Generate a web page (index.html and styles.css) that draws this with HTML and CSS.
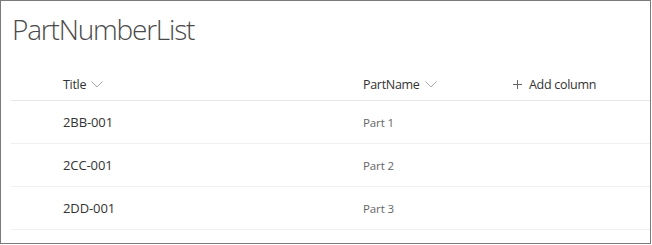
FILE: index.html
```html
<!DOCTYPE html>
<html>
<head>
    <title>PartNumberList</title>
    <meta charset="utf-8">
    <link rel="stylesheet" href="styles.css">
</head>
<body>
    <div class="frame">
        <h1 class="list-title">PartNumberList</h1>
        <div class="list">
            <div class="row head">
                <div class="cell col-title">Title
                    <svg class="chev" width="12" height="7" viewBox="0 0 12 7"><polyline points="0.5,0.5 6,6 11.5,0.5" fill="none" stroke="#a6a6a6" stroke-width="1"/></svg>
                </div>
                <div class="cell col-part">PartName
                    <svg class="chev" width="12" height="7" viewBox="0 0 12 7"><polyline points="0.5,0.5 6,6 11.5,0.5" fill="none" stroke="#a6a6a6" stroke-width="1"/></svg>
                </div>
                <div class="cell col-add">
                    <svg class="plus" width="9" height="9" viewBox="0 0 9 9"><path d="M4.5 0v9M0 4.5h9" stroke="#666" stroke-width="1"/></svg>
                    Add column
                </div>
            </div>
            <div class="row">
                <div class="cell col-title">2BB-001</div>
                <div class="cell col-part small">Part 1</div>
            </div>
            <div class="row">
                <div class="cell col-title">2CC-001</div>
                <div class="cell col-part small">Part 2</div>
            </div>
            <div class="row">
                <div class="cell col-title">2DD-001</div>
                <div class="cell col-part small">Part 3</div>
            </div>
        </div>
    </div>
</body>
</html>
```

FILE: styles.css
```css
body {
    margin: 0;
    font-family: "Open Sans", "Noto Sans", sans-serif;
    color: #333;
    background: #fff;
}

.frame {
    box-sizing: border-box;
    width: 651px;
    height: 244px;
    border: 1px solid #7a7a7a;
    overflow: hidden;
}

.list-title {
    margin: 0;
    padding: 8px 0 1px 11px;
    font-size: 28px;
    font-weight: 300;
    letter-spacing: -1.2px;
    line-height: 40px;
    color: #4a4a4a;
}

.list {
    margin-left: 10px;
    margin-top: 10px;
}

.row {
    display: flex;
    align-items: center;
    height: 42px;
    border-bottom: 1px solid #f0f0f0;
    padding-left: 52px;
}

.row.head {
    border-bottom-color: #e6e6e6;
    height: 41px;
    padding-top: 8px;
    box-sizing: border-box;
}

.cell {
    display: flex;
    align-items: center;
    font-size: 13px;
    letter-spacing: -0.1px;
}

.col-title {
    width: 300px;
}

.col-part {
    width: 150px;
}

.head .cell {
    font-size: 12.5px;
    letter-spacing: -0.3px;
    color: #333;
}

.small {
    font-size: 11.5px;
    color: #666;
}

.chev {
    margin-left: 5px;
}

.plus {
    margin-right: 7px;
}
```
